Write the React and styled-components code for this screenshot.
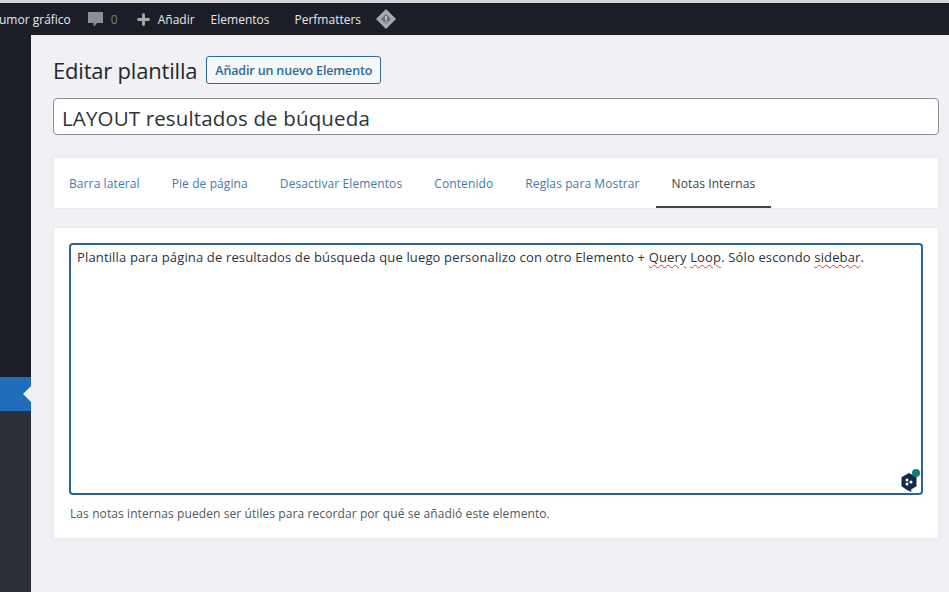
import React from "react";
import styled, { createGlobalStyle } from "styled-components";
import { Plus } from "lucide-react";

const GlobalStyle = createGlobalStyle`
  html, body {
    margin: 0;
    padding: 0;
    height: 100%;
    overflow: hidden;
    background: #f0f0f5;
  }
  * {
    box-sizing: border-box;
  }
`;

const font = `"Open Sans", "Noto Sans", "Liberation Sans", sans-serif`;

const Page = styled.div`
  width: 949px;
  height: 592px;
  display: flex;
  flex-direction: column;
  font-family: ${font};
  color: #2c3338;
  overflow: hidden;
`;

const AdminBar = styled.header`
  height: 35px;
  flex: none;
  background: #1b1e27;
  border-top: 3px solid #d5d5d8;
  display: flex;
  align-items: center;
  overflow: hidden;
  color: #f0f0f1;
  font-size: 12px;
  letter-spacing: 0;
`;

const BarText = styled.span`
  white-space: nowrap;
  margin-left: ${(p) => p.$left}px;
  color: ${(p) => p.$color || "#e8e8ea"};
`;

const BarIcon = styled.svg`
  flex: none;
  margin-left: ${(p) => p.$left}px;
`;

const Body = styled.div`
  flex: 1;
  display: flex;
  min-height: 0;
`;

const Sidebar = styled.aside`
  width: 31px;
  flex: none;
  display: flex;
  flex-direction: column;
  background: #1b1e27;
`;

const SideSpacer = styled.div`
  height: 342px;
  flex: none;
`;

const ActiveItem = styled.div`
  height: 34px;
  flex: none;
  background: #1f6dbb;
  position: relative;
  &::after {
    content: "";
    position: absolute;
    right: 0;
    top: 9px;
    border: 8px solid transparent;
    border-left-width: 0;
    border-right-color: #f0f0f5;
  }
`;

const SubMenu = styled.div`
  flex: 1;
  background: #2c2f38;
`;

const Main = styled.main`
  flex: 1;
  min-width: 0;
  background: #f0f0f5;
  padding: 20px 10px 0 22px;
`;

const TitleRow = styled.div`
  display: flex;
  align-items: center;
  gap: 9px;
  height: 30px;
`;

const Title = styled.h1`
  margin: 0;
  font-size: 22px;
  font-weight: 400;
  letter-spacing: -0.2px;
  color: #23282d;
`;

const AddButton = styled.button`
  height: 28px;
  width: 175px;
  padding: 0;
  background: #f6f7f7;
  border: 1px solid #2c6a99;
  border-radius: 3px;
  color: #2f6a9c;
  font-family: ${font};
  font-size: 12.5px;
  font-weight: 600;
  letter-spacing: -0.15px;
`;

const TitleInput = styled.div`
  margin-top: 13px;
  height: 37px;
  background: #fff;
  border: 1px solid #8c8f94;
  border-radius: 4px;
  padding: 2px 8px 0;
  display: flex;
  align-items: center;
  font-size: 20.5px;
  letter-spacing: 0.15px;
  color: #2c3338;
`;

const TabsCard = styled.nav`
  margin-top: 22px;
  height: 52px;
  background: #fff;
  border: 1px solid #e9e9ee;
  display: flex;
`;

const Tab = styled.a`
  height: 50px;
  padding: 2px 16px 0;
  display: flex;
  align-items: center;
  font-size: 12px;
  letter-spacing: 0.1px;
  white-space: nowrap;
  color: ${(p) => (p.$active ? "#3c434a" : "#3f7cab")};
  border-bottom: 2px solid ${(p) => (p.$active ? "#3c434a" : "transparent")};
  &:first-child {
    padding-left: 15px;
  }
`;

const NotesCard = styled.section`
  margin-top: 18px;
  height: 312px;
  background: #fff;
  border: 1px solid #e9e9ee;
  padding: 15px 15px 0;
`;

const NotesBox = styled.div`
  height: 252px;
  border: 2px solid #2b6491;
  border-radius: 4px;
  padding: 2px 6px;
  font-size: 13px;
  line-height: 20px;
  letter-spacing: 0.15px;
  color: #2c3338;
  position: relative;
`;

const Misspelled = styled.span`
  text-decoration: underline wavy #d63638 1px;
  text-underline-offset: 2px;
`;

const AssistantBadge = styled.svg`
  position: absolute;
  right: -1px;
  bottom: -1px;
`;

const Hint = styled.p`
  margin: 10px 0 0 1px;
  font-size: 12px;
  letter-spacing: 0.09px;
  color: #50575e;
`;

const tabs = [
  "Barra lateral",
  "Pie de página",
  "Desactivar Elementos",
  "Contenido",
  "Reglas para Mostrar",
];

export default function App() {
  return (
    <Page>
      <GlobalStyle />
      <AdminBar>
        <BarText $left={-1}>umor gráfico</BarText>
        <BarIcon $left={16} width="17" height="17" viewBox="0 0 17 17">
          <path d="M1 1h15v11h-6l-3.500 4v-4H1z" fill="#8c8f94" />
        </BarIcon>
        <BarText $left={7} $color="#7d8085">0</BarText>
        <Plus size={17} strokeWidth={4} color="#a7aaad" style={{ marginLeft: 17, flex: "none" }} />
        <BarText $left={6}>Añadir</BarText>
        <BarText $left={16}>Elementos</BarText>
        <BarText $left={25}>Perfmatters</BarText>
        <BarIcon $left={15} width="20" height="20" viewBox="0 0 20 20">
          <path d="M10 0l10 10-10 10L0 10z" fill="#a7aaad" />
          <path d="M10 5l5 5-5 5-5-5z" fill="#6b6e73" />
          <path d="M10 7v4M10 12v1.500" stroke="#d5d5d8" strokeWidth="1.500" fill="none" />
        </BarIcon>
      </AdminBar>
      <Body>
        <Sidebar>
          <SideSpacer />
          <ActiveItem />
          <SubMenu />
        </Sidebar>
        <Main>
          <TitleRow>
            <Title>Editar plantilla</Title>
            <AddButton>Añadir un nuevo Elemento</AddButton>
          </TitleRow>
          <TitleInput>LAYOUT resultados de búqueda</TitleInput>
          <TabsCard>
            {tabs.map((tab) => (
              <Tab key={tab}>{tab}</Tab>
            ))}
            <Tab $active>Notas Internas</Tab>
          </TabsCard>
          <NotesCard>
            <NotesBox>
              Plantilla para página de resultados de búsqueda que luego personalizo con otro Elemento +{" "}
              <Misspelled>Query</Misspelled> <Misspelled>Loop</Misspelled>. Sólo escondo{" "}
              <Misspelled>sidebar</Misspelled>.
              <AssistantBadge width="22" height="26" viewBox="0 0 22 26">
                <path d="M9 5l7.500 4.300v9L11 21.500 11.500 24 7 22 1.500 18.300v-9z" fill="#14294a" />
                <circle cx="7" cy="12" r="1.500" fill="#fff" />
                <circle cx="11" cy="14" r="1.500" fill="#fff" />
                <circle cx="7" cy="16" r="1.500" fill="#fff" />
                <circle cx="16" cy="5" r="4" fill="#0e7c7b" />
              </AssistantBadge>
            </NotesBox>
            <Hint>Las notas internas pueden ser útiles para recordar por qué se añadió este elemento.</Hint>
          </NotesCard>
        </Main>
      </Body>
    </Page>
  );
}
